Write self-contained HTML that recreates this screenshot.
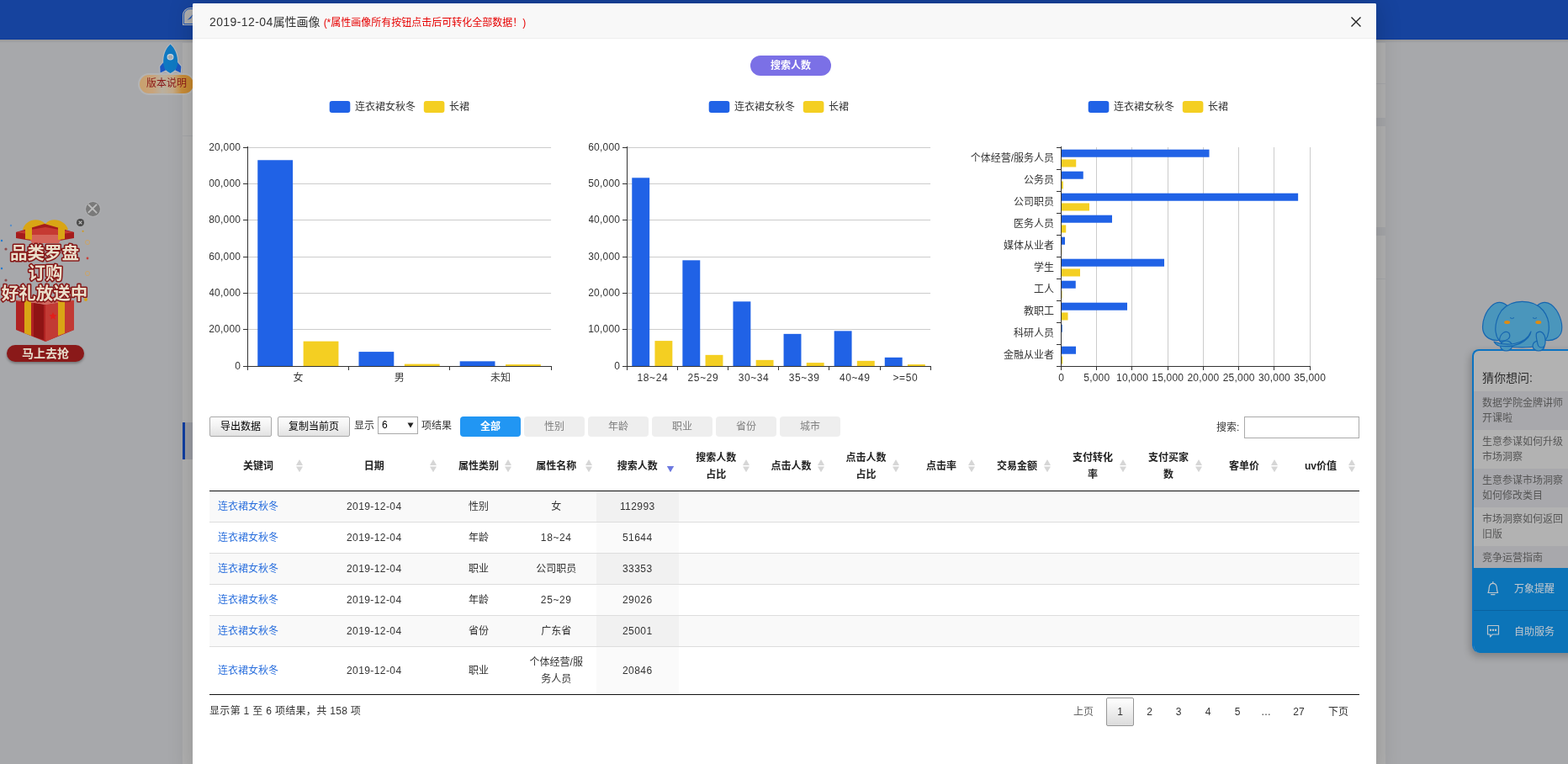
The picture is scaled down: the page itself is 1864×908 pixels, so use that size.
<!DOCTYPE html>
<html lang="zh-CN">
<head>
<meta charset="utf-8">
<title>2019-12-04属性画像</title>
<style>
*{box-sizing:border-box}
html,body{margin:0;padding:0}
body{width:1864px;height:908px;overflow:hidden;position:relative;background:#a7a8ab;
  font-family:"Liberation Sans","Noto Sans CJK SC",sans-serif;font-size:12px;color:#333}
.abs{position:absolute}
#root{position:absolute;left:0;top:0;width:1864px;height:908px;overflow:hidden;will-change:transform}
#topbar{left:0;top:0;width:1864px;height:47px;background:#16439e;border-bottom:1px solid #0c3a9a}
.strip{background:#b2b2b2}
#modal{left:229px;top:4px;width:1407px;height:920px;background:#fff;border-radius:2px;
  box-shadow:0 0 30px rgba(0,0,0,.2);will-change:transform}
#mhead{left:0;top:0;width:1407px;height:42px;background:#f8f8f8;border-bottom:1px solid #eee;border-radius:2px 2px 0 0}
#mtitle{left:20px;top:0;height:42px;line-height:45px;font-size:14px;color:#333;white-space:nowrap}
#mtitle span{font-size:12px;color:#e60000;margin-left:4px}
svg text{font-family:"Liberation Sans","Noto Sans CJK SC",sans-serif;font-size:12px;fill:#333}
.pill{left:892px;top:66px;width:96px;height:24px;border-radius:12px;background:#7b70e6;color:#fff;
  font-weight:bold;font-size:12px;line-height:24px;text-align:center}
.wbtn{top:495px;height:24px;border:1px solid #a9a9a9;border-radius:2px;
  background:linear-gradient(#fdfdfd,#f3f3f3 45%,#e2e2e2);font-size:12px;line-height:22px;text-align:center;color:#000}
.fbtn{top:495px;width:72px;height:24px;border-radius:4px;background:#eee;color:#7f7f7f;font-size:12px;line-height:25px;text-align:center}
.fbtn.on{background:#2196f3;color:#fff;font-weight:bold}
.lbl{font-size:12px;color:#333;white-space:nowrap;line-height:20px;height:20px}
.th{top:523.5px;height:60px;font-weight:bold;font-size:12px;color:#222;text-align:center;line-height:20px;
  display:flex;align-items:center;justify-content:center}
.row{left:249px;width:1367px;border-bottom:1px solid #ddd}
.td{top:0;height:100%;font-size:12px;color:#333;text-align:center;line-height:20px;display:flex;align-items:center;justify-content:center}
.td.n{letter-spacing:.42px}
.td.t{letter-spacing:.62px}
.td.l{justify-content:flex-start;padding-left:10px;color:#2a6fdd}
.pg{top:829px;height:34px;line-height:32px;font-size:12px;color:#333;text-align:center;border:1px solid transparent;border-radius:2px}
.pg.cur{border-color:#979797;background:linear-gradient(#fff,#dcdcdc)}
.rq{left:0;width:130px;height:46px;padding:5px 0 0 10px;font-size:12px;line-height:18px;color:#565656;white-space:nowrap}
.g{will-change:transform}
</style>
</head>
<body>
<div id="root">
<div class="abs" id="topbar"></div>
<div class="abs" style="left:0;top:47px;width:1864px;height:4px;background:linear-gradient(rgba(0,0,0,.10),rgba(0,0,0,0))"></div>
<div class="abs" style="left:217px;top:9px;width:24px;height:21px;border-radius:9px 9px 0 0;background:#b3b3b3"></div>
<div class="abs" style="left:218px;top:10px;width:22px;height:19px;border-radius:8px 8px 0 0;border:1px solid #1c55b8;background:#b0b0b0"></div>
<svg class="abs" style="left:222px;top:16px" width="8" height="9" viewBox="0 0 8 9"><path d="M0.5 8 L7.5 1 L5 6 Z" fill="#1c55b8"/></svg>
<div class="abs strip" style="left:217px;top:51px;width:12px;height:110px"></div>
<div class="abs strip" style="left:217px;top:162px;width:12px;height:746px"></div>
<div class="abs" style="left:217px;top:502px;width:12px;height:44px;background:#9c9ea5"></div>
<div class="abs" style="left:217px;top:502px;width:3px;height:44px;background:#0f3ea3"></div>
<div class="abs strip" style="left:1636px;top:51px;width:11px;height:48px"></div>
<div class="abs strip" style="left:1636px;top:100px;width:11px;height:40px"></div>
<div class="abs strip" style="left:1636px;top:150px;width:11px;height:120px"></div>
<div class="abs strip" style="left:1636px;top:280px;width:11px;height:51px"></div>
<div class="abs strip" style="left:1636px;top:332px;width:11px;height:576px"></div>
<div class="abs" style="left:0;top:0;width:229px;height:440px;will-change:transform">
<div class="abs" style="left:163.5px;top:86.5px;width:68px;height:26px;border-radius:13px;background:rgba(190,190,190,.55)"></div>
<div class="abs" style="left:165.5px;top:88.5px;width:64px;height:22px;border-radius:11px;background:linear-gradient(90deg,#c9a06c 0%,#c8a47c 25%,#b9b0a0 42%,#c4aa88 62%,#c98f3c 78%,#c8872a 100%);color:#8a1717;font-size:12px;line-height:21px;padding-left:8.5px;white-space:nowrap">版本说明</div>
<svg class="abs" style="left:186px;top:50px" width="34" height="40" viewBox="186 50 34 40">
<path d="M202.5 52.5 C196.5 58 193.8 66 194.2 74 L190.2 79 L190.6 86.4 L196 84 L202.5 87 L209 84 L214.8 86.4 L215.3 79 L211.2 74 C211.4 66 208.5 58 202.5 52.5 Z" fill="none" stroke="#b9bcc0" stroke-width="2" stroke-linejoin="round"/>
<path d="M194.3 74 L190.2 79 L190.6 86.4 L197 83.5 Z" fill="#1a57c2"/>
<path d="M211 74 L215.3 79 L214.8 86.4 L208.3 83.5 Z" fill="#1a57c2"/>
<path d="M202.5 52.5 C196.5 58 193.8 66 194.2 75 C194.5 80 196 84 202.5 87 C209 84 210.8 80 211.1 75 C211.4 66 208.5 58 202.5 52.5 Z" fill="#0f79c2"/>
<ellipse cx="202.5" cy="67.8" rx="3.4" ry="3.2" fill="#a9adb0" stroke="#c9d6e0" stroke-width="1.1"/>
</svg>
<div class="abs" style="left:100.5px;top:238.5px;width:19px;height:19px;border-radius:10px;background:#7a7a7a;border:1px solid #b4b5b7"></div>
<svg class="abs" style="left:101px;top:239px" width="18" height="18" viewBox="0 0 18 18"><path d="M4.4 4.4 L13.6 13.6 M13.6 4.4 L4.4 13.4" stroke="#bcbcbc" stroke-width="2" stroke-linecap="round"/></svg>
<div class="abs" style="left:91px;top:260px;width:9.4px;height:9.4px;border-radius:5px;background:#484848"></div>
<svg class="abs" style="left:91.2px;top:260.2px" width="9" height="9" viewBox="0 0 9 9"><path d="M2.6 2.6 L6.4 6.4 M6.4 2.6 L2.6 6.4" stroke="#c4c4c4" stroke-width="1.1"/></svg>
<svg class="abs" style="left:0;top:255px" width="112" height="160" viewBox="0 255 112 160">
<!-- lid -->
<path d="M27 273 C30 262 44 257 54 266 C62 257 78 262 81 273 Z" fill="#d9a515"/>
<path d="M19 276 L53 266 L88 276 L88 283 L54 289 L19 283 Z" fill="#a51c1c"/>
<path d="M19 276 L53 281 L88 276 L54 270 Z" fill="#c63a32"/>
<path d="M33 279 L75 279 L70 289 L38 289 Z" fill="#d5645a"/>
<path d="M30 272 L38 270 L38 285 L30 284 Z M69 270 L77 272 L77 284 L69 285 Z" fill="#d9a515"/>
<!-- box -->
<path d="M19 357 L54 362 L88 357 L88 392 L54 406 L19 392 Z" fill="#b02222"/>
<path d="M54 362 L88 357 L88 392 L54 406 Z" fill="#c23a34"/>
<path d="M19 357 L54 351 L88 357 L54 362 Z" fill="#d26a60"/>
<path d="M29 357 L37 358 L37 399 L29 396 Z M69 358 L77 357 L77 396 L69 399 Z" fill="#d9a515"/>
<path d="M40 360 L52 362 L52 404 L40 400 Z" fill="#8f1414"/>
<path d="M63 371 l1.4 3 3.2 .4 -2.4 2.2 .7 3.2 -2.9 -1.7 -2.9 1.7 .7 -3.2 -2.4 -2.2 3.2 -.4 Z" fill="#e0201c"/>
<!-- confetti -->
<circle cx="2" cy="286" r="1.2" fill="#1f7ad0"/><circle cx="2" cy="319" r="1.2" fill="#1f7ad0"/><circle cx="13" cy="268" r="1.2" fill="#5b8fc8"/>
<circle cx="98.6" cy="274.8" r="1.1" fill="#cf9a22"/><circle cx="104" cy="307" r="1.4" fill="#c8403a"/><circle cx="102" cy="356" r="2" fill="#d7a21a"/>
<circle cx="104" cy="288" r="2.6" fill="none" stroke="#c9a36a" stroke-width="1"/><circle cx="104" cy="325" r="2.6" fill="none" stroke="#c9a36a" stroke-width="1"/>
<circle cx="7" cy="296" r="1.6" fill="#8c4a4a"/><circle cx="7" cy="333" r="1.6" fill="#8c4a4a"/>
<g style="font-weight:bold;font-size:20.5px" text-anchor="middle" stroke="#861616" stroke-width="3.2" stroke-linejoin="round" paint-order="stroke">
<text x="53" y="308" style="fill:#eadfcb;font-size:20.5px;font-weight:bold;paint-order:stroke">品类罗盘</text>
<text x="54" y="332" style="fill:#eadfcb;font-size:20.5px;font-weight:bold;paint-order:stroke">订购</text>
<text x="53" y="356" style="fill:#eadfcb;font-size:20.5px;font-weight:bold;paint-order:stroke">好礼放送中</text>
</g>
</svg>
<div class="abs" style="left:8px;top:410px;width:92px;height:20px;border-radius:10px;background:#8a1919;box-shadow:0 2px 3px rgba(0,0,0,.3);color:#e6dccb;font-weight:bold;font-size:14px;line-height:20px;text-align:center;letter-spacing:0">马上去抢</div>
</div>

<div class="abs" style="left:1750px;top:415px;width:130px;height:361px;border-radius:8px 0 0 9px;box-shadow:-2px 4px 10px rgba(0,0,0,.24);background:#b2b2b2"></div>
<div class="abs" style="left:1750px;top:415px;width:130px;height:361px;border:2px solid #0b73c1;border-right:0;border-bottom:0;border-radius:8px 0 0 9px;overflow:hidden;background:#b2b2b2">
<div class="abs" style="left:10px;top:22px;font-size:14px;line-height:20px;color:#2b2b2b;white-space:nowrap">猜你想问:</div>
<div class="abs rq" style="top:48px;background:#a8a8ac">数据学院金牌讲师<br>开课啦</div>
<div class="abs rq" style="top:94px">生意参谋如何升级<br>市场洞察</div>
<div class="abs rq" style="top:140px;background:#a8a8ac">生意参谋市场洞察<br>如何修改类目</div>
<div class="abs rq" style="top:186px">市场洞察如何返回<br>旧版</div>
<div class="abs rq" style="top:232px;background:#a8a8ac">竞争运营指南</div>
<div class="abs" style="left:-2px;top:258px;width:134px;height:102px;background:#0c74b8"></div>
<div class="abs" style="left:-2px;top:308px;width:134px;height:1px;background:#0a62a0"></div>
<svg class="abs" style="left:12.2px;top:269.7px" width="22" height="24" viewBox="0 0 22 24" fill="none" stroke="#bfc6cc" stroke-width="1.2" stroke-linecap="round" stroke-linejoin="round">
<path d="M5 17.5 C6.2 15.5 6 13.5 6.3 11 C6.7 8 8.3 6.3 10.8 6.3 C13.3 6.3 14.9 8 15.3 11 C15.6 13.5 15.4 15.5 16.6 17.5 Z"/><path d="M10.8 6.2 V4.6"/><path d="M8.6 19.6 H13"/></svg>
<svg class="abs" style="left:12.2px;top:320.5px" width="22" height="24" viewBox="0 0 22 24" fill="none" stroke="#bfc6cc" stroke-width="1.2" stroke-linejoin="round">
<path d="M4.5 5.5 H17.5 V16 H10 L7.5 18.8 V16 H4.5 Z"/><circle cx="8" cy="10.8" r=".6" fill="#bfc6cc"/><circle cx="11" cy="10.8" r=".6" fill="#bfc6cc"/><circle cx="14" cy="10.8" r=".6" fill="#bfc6cc"/></svg>
<div class="abs" style="left:48px;top:273px;font-size:12px;line-height:20px;color:#c3c8cd;white-space:nowrap">万象提醒</div>
<div class="abs" style="left:48px;top:324px;font-size:12px;line-height:20px;color:#c3c8cd;white-space:nowrap">自助服务</div>
</div>
<svg class="abs" style="left:1755px;top:352px;" width="109" height="70" viewBox="1755 352 109 70">
<g fill="#4a96bc" stroke="#1666b0" stroke-width="1.2" stroke-linejoin="round">
<path d="M1793 365 C1789 359 1781 357.5 1775 362 C1766 369 1761 383 1763 393 C1765 401 1773 405.5 1782 404.5 C1787 404 1791 402 1793 400 Z"/>
<path d="M1826 365 C1830 359 1838 357.5 1844 362 C1853 369 1858 383 1856.5 393 C1855 401 1847 405.5 1838 404.5 C1833 404 1829 402 1826 400 Z"/>
<path d="M1785 369 C1792 361 1800 358.3 1809.5 358.3 C1819 358.3 1828 361 1834.5 369 C1840 376 1842 386 1841 394 C1840 402 1836 408 1828 411 C1818 413.5 1800 413.5 1791 411 C1783 408 1779 402 1778 394 C1777 386 1780 376 1785 369 Z"/>
<ellipse cx="1790.5" cy="411" rx="7" ry="6"/>
<ellipse cx="1829" cy="411" rx="7" ry="6"/>
<path d="M1776 406 C1790 412 1814 410 1820 394 C1818 406 1800 414 1782 411 C1779 410 1777 408 1776 406 Z"/>
<path d="M1782.5 405 C1783 396 1790 392 1794 396 C1797 402 1791 406 1782.5 405 Z"/>
<path d="M1826.5 396 C1832 391 1838 397 1837 408 C1836 415 1829 414 1828 409 C1827 404 1825.5 400 1826.5 396 Z"/>
</g>
<path d="M1795 377.6 q2.5 2 5 0 M1822 377.6 q2.5 2 5 0" stroke="#1666b0" stroke-width="1" fill="none"/>
<ellipse cx="1791.6" cy="383" rx="3.5" ry="2" fill="#de8c12"/>
<ellipse cx="1828.8" cy="383" rx="3.5" ry="2" fill="#de8c12"/>
</svg>

<div class="abs" id="modal">
<div class="abs" id="mhead"><div class="abs" id="mtitle"><i style="font-style:normal;letter-spacing:.4px">2019-12-04</i>属性画像<span>(*属性画像所有按钮点击后可转化全部数据！)</span></div><svg class="abs" style="left:1376px;top:15px" width="14" height="14" viewBox="0 0 14 14"><path d="M1.5 1.5 L12.5 12.5 M12.5 1.5 L1.5 12.5" stroke="#222" stroke-width="1.4" fill="none"/></svg></div>
</div>
<div class="abs pill">搜索人数</div>
<svg class="abs" style="left:249px;top:100px;overflow:hidden" width="451" height="380" viewBox="249 100 451 380"><rect x="391.7" y="120" width="24.6" height="14" rx="3" ry="3" fill="#2062e6"/><text x="422" y="131.3">连衣裙女秋冬</text><rect x="503.8" y="120" width="24.6" height="14" rx="3" ry="3" fill="#f4cf22"/><text x="534" y="131.3">长裙</text><line x1="294.5" x2="655.1" y1="391.5" y2="391.5" stroke="#ccc" stroke-width="1"/><line x1="294.5" x2="655.1" y1="348.5" y2="348.5" stroke="#ccc" stroke-width="1"/><line x1="294.5" x2="655.1" y1="305.5" y2="305.5" stroke="#ccc" stroke-width="1"/><line x1="294.5" x2="655.1" y1="261.5" y2="261.5" stroke="#ccc" stroke-width="1"/><line x1="294.5" x2="655.1" y1="218.5" y2="218.5" stroke="#ccc" stroke-width="1"/><line x1="294.5" x2="655.1" y1="175.5" y2="175.5" stroke="#ccc" stroke-width="1"/><rect x="306.27" y="190.28" width="41.81" height="245.22" fill="#2062e6"/><rect x="360.62" y="405.63" width="41.81" height="29.87" fill="#f4cf22"/><rect x="426.47" y="418.09" width="41.81" height="17.41" fill="#2062e6"/><rect x="480.82" y="432.61" width="41.81" height="2.89" fill="#f4cf22"/><rect x="546.67" y="429.36" width="41.81" height="6.14" fill="#2062e6"/><rect x="601.02" y="433.11" width="41.81" height="2.39" fill="#f4cf22"/><line x1="294.5" x2="294.5" y1="174.0" y2="436.0" stroke="#333" stroke-width="1"/><line x1="294.0" x2="656.0" y1="435.5" y2="435.5" stroke="#333" stroke-width="1"/><line x1="289.0" x2="294.5" y1="435.5" y2="435.5" stroke="#333" stroke-width="1"/><text x="286.2" y="439.40" text-anchor="end" style="letter-spacing:.22px">0</text><line x1="289.0" x2="294.5" y1="391.5" y2="391.5" stroke="#333" stroke-width="1"/><text x="286.2" y="395.40" text-anchor="end" style="letter-spacing:.22px">20,000</text><line x1="289.0" x2="294.5" y1="348.5" y2="348.5" stroke="#333" stroke-width="1"/><text x="286.2" y="352.40" text-anchor="end" style="letter-spacing:.22px">40,000</text><line x1="289.0" x2="294.5" y1="305.5" y2="305.5" stroke="#333" stroke-width="1"/><text x="286.2" y="309.40" text-anchor="end" style="letter-spacing:.22px">60,000</text><line x1="289.0" x2="294.5" y1="261.5" y2="261.5" stroke="#333" stroke-width="1"/><text x="286.2" y="265.40" text-anchor="end" style="letter-spacing:.22px">80,000</text><line x1="289.0" x2="294.5" y1="218.5" y2="218.5" stroke="#333" stroke-width="1"/><text x="286.2" y="222.40" text-anchor="end" style="letter-spacing:.22px">100,000</text><line x1="289.0" x2="294.5" y1="175.5" y2="175.5" stroke="#333" stroke-width="1"/><text x="286.2" y="179.40" text-anchor="end" style="letter-spacing:.22px">120,000</text><line x1="294.5" x2="294.5" y1="435.0" y2="440.0" stroke="#333" stroke-width="1"/><line x1="414.5" x2="414.5" y1="435.0" y2="440.0" stroke="#333" stroke-width="1"/><line x1="534.5" x2="534.5" y1="435.0" y2="440.0" stroke="#333" stroke-width="1"/><line x1="655.5" x2="655.5" y1="435.0" y2="440.0" stroke="#333" stroke-width="1"/><text x="354.60" y="453.2" text-anchor="middle">女</text><text x="474.80" y="453.2" text-anchor="middle">男</text><text x="595.00" y="453.2" text-anchor="middle">未知</text></svg>
<svg class="abs" style="left:700px;top:100px;overflow:hidden" width="451" height="380" viewBox="700 100 451 380"><rect x="842.7" y="120" width="24.6" height="14" rx="3" ry="3" fill="#2062e6"/><text x="873" y="131.3">连衣裙女秋冬</text><rect x="954.8" y="120" width="24.6" height="14" rx="3" ry="3" fill="#f4cf22"/><text x="985" y="131.3">长裙</text><line x1="745.5" x2="1106.1" y1="391.5" y2="391.5" stroke="#ccc" stroke-width="1"/><line x1="745.5" x2="1106.1" y1="348.5" y2="348.5" stroke="#ccc" stroke-width="1"/><line x1="745.5" x2="1106.1" y1="305.5" y2="305.5" stroke="#ccc" stroke-width="1"/><line x1="745.5" x2="1106.1" y1="261.5" y2="261.5" stroke="#ccc" stroke-width="1"/><line x1="745.5" x2="1106.1" y1="218.5" y2="218.5" stroke="#ccc" stroke-width="1"/><line x1="745.5" x2="1106.1" y1="175.5" y2="175.5" stroke="#ccc" stroke-width="1"/><rect x="751.26" y="211.31" width="20.90" height="224.19" fill="#2062e6"/><rect x="778.44" y="405.10" width="20.90" height="30.40" fill="#f4cf22"/><rect x="811.36" y="309.32" width="20.90" height="126.18" fill="#2062e6"/><rect x="838.54" y="421.85" width="20.90" height="13.65" fill="#f4cf22"/><rect x="871.46" y="358.35" width="20.90" height="77.15" fill="#2062e6"/><rect x="898.64" y="427.85" width="20.90" height="7.65" fill="#f4cf22"/><rect x="931.56" y="396.85" width="20.90" height="38.65" fill="#2062e6"/><rect x="958.74" y="431.10" width="20.90" height="4.40" fill="#f4cf22"/><rect x="991.66" y="393.35" width="20.90" height="42.15" fill="#2062e6"/><rect x="1018.84" y="428.85" width="20.90" height="6.65" fill="#f4cf22"/><rect x="1051.76" y="424.85" width="20.90" height="10.65" fill="#2062e6"/><rect x="1078.94" y="433.11" width="20.90" height="2.39" fill="#f4cf22"/><line x1="745.5" x2="745.5" y1="174.0" y2="436.0" stroke="#333" stroke-width="1"/><line x1="745.0" x2="1107.0" y1="435.5" y2="435.5" stroke="#333" stroke-width="1"/><line x1="740.0" x2="745.5" y1="435.5" y2="435.5" stroke="#333" stroke-width="1"/><text x="737.2" y="439.40" text-anchor="end" style="letter-spacing:.22px">0</text><line x1="740.0" x2="745.5" y1="391.5" y2="391.5" stroke="#333" stroke-width="1"/><text x="737.2" y="395.40" text-anchor="end" style="letter-spacing:.22px">10,000</text><line x1="740.0" x2="745.5" y1="348.5" y2="348.5" stroke="#333" stroke-width="1"/><text x="737.2" y="352.40" text-anchor="end" style="letter-spacing:.22px">20,000</text><line x1="740.0" x2="745.5" y1="305.5" y2="305.5" stroke="#333" stroke-width="1"/><text x="737.2" y="309.40" text-anchor="end" style="letter-spacing:.22px">30,000</text><line x1="740.0" x2="745.5" y1="261.5" y2="261.5" stroke="#333" stroke-width="1"/><text x="737.2" y="265.40" text-anchor="end" style="letter-spacing:.22px">40,000</text><line x1="740.0" x2="745.5" y1="218.5" y2="218.5" stroke="#333" stroke-width="1"/><text x="737.2" y="222.40" text-anchor="end" style="letter-spacing:.22px">50,000</text><line x1="740.0" x2="745.5" y1="175.5" y2="175.5" stroke="#333" stroke-width="1"/><text x="737.2" y="179.40" text-anchor="end" style="letter-spacing:.22px">60,000</text><line x1="745.5" x2="745.5" y1="435.0" y2="440.0" stroke="#333" stroke-width="1"/><line x1="805.5" x2="805.5" y1="435.0" y2="440.0" stroke="#333" stroke-width="1"/><line x1="865.5" x2="865.5" y1="435.0" y2="440.0" stroke="#333" stroke-width="1"/><line x1="925.5" x2="925.5" y1="435.0" y2="440.0" stroke="#333" stroke-width="1"/><line x1="985.5" x2="985.5" y1="435.0" y2="440.0" stroke="#333" stroke-width="1"/><line x1="1046.5" x2="1046.5" y1="435.0" y2="440.0" stroke="#333" stroke-width="1"/><line x1="1106.5" x2="1106.5" y1="435.0" y2="440.0" stroke="#333" stroke-width="1"/><text x="775.85" y="453.2" text-anchor="middle" style="letter-spacing:.6px">18~24</text><text x="835.95" y="453.2" text-anchor="middle" style="letter-spacing:.6px">25~29</text><text x="896.05" y="453.2" text-anchor="middle" style="letter-spacing:.6px">30~34</text><text x="956.15" y="453.2" text-anchor="middle" style="letter-spacing:.6px">35~39</text><text x="1016.25" y="453.2" text-anchor="middle" style="letter-spacing:.6px">40~49</text><text x="1076.35" y="453.2" text-anchor="middle" style="letter-spacing:.6px">>=50</text></svg>
<svg class="abs" style="left:1151px;top:100px;overflow:hidden" width="465" height="380" viewBox="1151 100 465 380"><rect x="1293.7" y="120" width="24.6" height="14" rx="3" ry="3" fill="#2062e6"/><text x="1324" y="131.3">连衣裙女秋冬</text><rect x="1405.8" y="120" width="24.6" height="14" rx="3" ry="3" fill="#f4cf22"/><text x="1436" y="131.3">长裙</text><line x1="1303.5" x2="1303.5" y1="175.0" y2="435.0" stroke="#ccc" stroke-width="1"/><line x1="1345.5" x2="1345.5" y1="175.0" y2="435.0" stroke="#ccc" stroke-width="1"/><line x1="1388.5" x2="1388.5" y1="175.0" y2="435.0" stroke="#ccc" stroke-width="1"/><line x1="1430.5" x2="1430.5" y1="175.0" y2="435.0" stroke="#ccc" stroke-width="1"/><line x1="1472.5" x2="1472.5" y1="175.0" y2="435.0" stroke="#ccc" stroke-width="1"/><line x1="1514.5" x2="1514.5" y1="175.0" y2="435.0" stroke="#ccc" stroke-width="1"/><line x1="1557.5" x2="1557.5" y1="175.0" y2="435.0" stroke="#ccc" stroke-width="1"/><rect x="1261.5" y="177.70" width="176.03" height="9.04" fill="#2062e6"/><rect x="1261.5" y="189.46" width="17.73" height="9.04" fill="#f4cf22"/><rect x="1261.5" y="203.70" width="26.25" height="9.04" fill="#2062e6"/><rect x="1261.5" y="215.46" width="2.28" height="9.04" fill="#f4cf22"/><rect x="1261.5" y="229.70" width="281.64" height="9.04" fill="#2062e6"/><rect x="1261.5" y="241.46" width="33.52" height="9.04" fill="#f4cf22"/><rect x="1261.5" y="255.70" width="60.51" height="9.04" fill="#2062e6"/><rect x="1261.5" y="267.46" width="5.74" height="9.04" fill="#f4cf22"/><rect x="1261.5" y="281.70" width="4.50" height="9.04" fill="#2062e6"/><rect x="1261.5" y="293.46" width="0.76" height="9.04" fill="#f4cf22"/><rect x="1261.5" y="307.70" width="122.52" height="9.04" fill="#2062e6"/><rect x="1261.5" y="319.46" width="22.50" height="9.04" fill="#f4cf22"/><rect x="1261.5" y="333.70" width="17.25" height="9.04" fill="#2062e6"/><rect x="1261.5" y="345.46" width="1.01" height="9.04" fill="#f4cf22"/><rect x="1261.5" y="359.70" width="78.51" height="9.04" fill="#2062e6"/><rect x="1261.5" y="371.46" width="8.02" height="9.04" fill="#f4cf22"/><rect x="1261.5" y="385.70" width="1.27" height="9.04" fill="#2062e6"/><rect x="1261.5" y="397.46" width="0.00" height="9.04" fill="#f4cf22"/><rect x="1261.5" y="411.70" width="17.51" height="9.04" fill="#2062e6"/><rect x="1261.5" y="423.46" width="1.69" height="9.04" fill="#f4cf22"/><line x1="1261.5" x2="1261.5" y1="174.0" y2="436.0" stroke="#333" stroke-width="1"/><line x1="1261.0" x2="1558.0" y1="435.5" y2="435.5" stroke="#333" stroke-width="1"/><line x1="1256.0" x2="1261.5" y1="175.5" y2="175.5" stroke="#333" stroke-width="1"/><line x1="1256.0" x2="1261.5" y1="201.5" y2="201.5" stroke="#333" stroke-width="1"/><line x1="1256.0" x2="1261.5" y1="227.5" y2="227.5" stroke="#333" stroke-width="1"/><line x1="1256.0" x2="1261.5" y1="253.5" y2="253.5" stroke="#333" stroke-width="1"/><line x1="1256.0" x2="1261.5" y1="279.5" y2="279.5" stroke="#333" stroke-width="1"/><line x1="1256.0" x2="1261.5" y1="305.5" y2="305.5" stroke="#333" stroke-width="1"/><line x1="1256.0" x2="1261.5" y1="331.5" y2="331.5" stroke="#333" stroke-width="1"/><line x1="1256.0" x2="1261.5" y1="357.5" y2="357.5" stroke="#333" stroke-width="1"/><line x1="1256.0" x2="1261.5" y1="383.5" y2="383.5" stroke="#333" stroke-width="1"/><line x1="1256.0" x2="1261.5" y1="409.5" y2="409.5" stroke="#333" stroke-width="1"/><line x1="1256.0" x2="1261.5" y1="435.5" y2="435.5" stroke="#333" stroke-width="1"/><text x="1253.0" y="191.80" text-anchor="end">个体经营/服务人员</text><text x="1253.0" y="217.80" text-anchor="end">公务员</text><text x="1253.0" y="243.80" text-anchor="end">公司职员</text><text x="1253.0" y="269.80" text-anchor="end">医务人员</text><text x="1253.0" y="295.80" text-anchor="end">媒体从业者</text><text x="1253.0" y="321.80" text-anchor="end">学生</text><text x="1253.0" y="347.80" text-anchor="end">工人</text><text x="1253.0" y="373.80" text-anchor="end">教职工</text><text x="1253.0" y="399.80" text-anchor="end">科研人员</text><text x="1253.0" y="425.80" text-anchor="end">金融从业者</text><line x1="1261.5" x2="1261.5" y1="435.0" y2="440.0" stroke="#333" stroke-width="1"/><text x="1261.60" y="453.2" text-anchor="middle" style="letter-spacing:.22px">0</text><line x1="1303.5" x2="1303.5" y1="435.0" y2="440.0" stroke="#333" stroke-width="1"/><text x="1303.82" y="453.2" text-anchor="middle" style="letter-spacing:.22px">5,000</text><line x1="1345.5" x2="1345.5" y1="435.0" y2="440.0" stroke="#333" stroke-width="1"/><text x="1346.04" y="453.2" text-anchor="middle" style="letter-spacing:.22px">10,000</text><line x1="1388.5" x2="1388.5" y1="435.0" y2="440.0" stroke="#333" stroke-width="1"/><text x="1388.26" y="453.2" text-anchor="middle" style="letter-spacing:.22px">15,000</text><line x1="1430.5" x2="1430.5" y1="435.0" y2="440.0" stroke="#333" stroke-width="1"/><text x="1430.49" y="453.2" text-anchor="middle" style="letter-spacing:.22px">20,000</text><line x1="1472.5" x2="1472.5" y1="435.0" y2="440.0" stroke="#333" stroke-width="1"/><text x="1472.71" y="453.2" text-anchor="middle" style="letter-spacing:.22px">25,000</text><line x1="1514.5" x2="1514.5" y1="435.0" y2="440.0" stroke="#333" stroke-width="1"/><text x="1514.93" y="453.2" text-anchor="middle" style="letter-spacing:.22px">30,000</text><line x1="1557.5" x2="1557.5" y1="435.0" y2="440.0" stroke="#333" stroke-width="1"/><text x="1557.15" y="453.2" text-anchor="middle" style="letter-spacing:.22px">35,000</text></svg>
<div class="abs wbtn" style="left:249px;width:74px">导出数据</div>
<div class="abs wbtn" style="left:330px;width:86px">复制当前页</div>
<div class="abs lbl" style="left:421px;top:496px">显示</div>
<div class="abs" style="left:449px;top:495px;width:48px;height:21px;border:1px solid #a9a9a9;background:#fff;font-size:12px;line-height:19px;padding-left:4px;color:#000">6<svg class="abs" style="right:4px;top:6px" width="8" height="7" viewBox="0 0 8 7"><path d="M0.5 0.5 L7.5 0.5 L4 6.5 Z" fill="#222"/></svg></div>
<div class="abs lbl" style="left:501px;top:496px">项结果</div>
<div class="abs fbtn on" style="left:547px">全部</div>
<div class="abs fbtn" style="left:623px">性别</div>
<div class="abs fbtn" style="left:699px">年龄</div>
<div class="abs fbtn" style="left:775px">职业</div>
<div class="abs fbtn" style="left:851px">省份</div>
<div class="abs fbtn" style="left:927px">城市</div>
<div class="abs lbl" style="left:1446px;top:498px">搜索:</div>
<div class="abs" style="left:1479px;top:495px;width:137px;height:26px;border:1px solid #aaa;background:#fff"></div>
<div class="abs th" style="left:249px;width:116px"><div>关键词</div></div><svg class="abs" style="left:350.5px;top:545px" width="10" height="17" viewBox="0 0 10 17"><path d="M5 1 L9 8 L1 8 Z" fill="#d6d6d6"/><path d="M1 9.5 L9 9.5 L5 16.3 Z" fill="#d6d6d6"/></svg>
<div class="abs th" style="left:365px;width:159.5px"><div>日期</div></div><svg class="abs" style="left:510.0px;top:545px" width="10" height="17" viewBox="0 0 10 17"><path d="M5 1 L9 8 L1 8 Z" fill="#d6d6d6"/><path d="M1 9.5 L9 9.5 L5 16.3 Z" fill="#d6d6d6"/></svg>
<div class="abs th" style="left:524.5px;width:89.0px"><div>属性类别</div></div><svg class="abs" style="left:599.0px;top:545px" width="10" height="17" viewBox="0 0 10 17"><path d="M5 1 L9 8 L1 8 Z" fill="#d6d6d6"/><path d="M1 9.5 L9 9.5 L5 16.3 Z" fill="#d6d6d6"/></svg>
<div class="abs th" style="left:613.5px;width:95.5px"><div>属性名称</div></div><svg class="abs" style="left:694.5px;top:545px" width="10" height="17" viewBox="0 0 10 17"><path d="M5 1 L9 8 L1 8 Z" fill="#d6d6d6"/><path d="M1 9.5 L9 9.5 L5 16.3 Z" fill="#d6d6d6"/></svg>
<div class="abs th" style="left:709px;width:97.5px"><div>搜索人数</div></div><svg class="abs" style="left:792.0px;top:545px" width="10" height="17" viewBox="0 0 10 17"><path d="M0.8 9 L9.2 9 L5 16.2 Z" fill="#6d79e0"/></svg>
<div class="abs th" style="left:806.5px;width:89.5px"><div>搜索人数<br>占比</div></div><svg class="abs" style="left:881.5px;top:545px" width="10" height="17" viewBox="0 0 10 17"><path d="M5 1 L9 8 L1 8 Z" fill="#d6d6d6"/><path d="M1 9.5 L9 9.5 L5 16.3 Z" fill="#d6d6d6"/></svg>
<div class="abs th" style="left:896px;width:89px"><div>点击人数</div></div><svg class="abs" style="left:970.5px;top:545px" width="10" height="17" viewBox="0 0 10 17"><path d="M5 1 L9 8 L1 8 Z" fill="#d6d6d6"/><path d="M1 9.5 L9 9.5 L5 16.3 Z" fill="#d6d6d6"/></svg>
<div class="abs th" style="left:985px;width:89px"><div>点击人数<br>占比</div></div><svg class="abs" style="left:1059.5px;top:545px" width="10" height="17" viewBox="0 0 10 17"><path d="M5 1 L9 8 L1 8 Z" fill="#d6d6d6"/><path d="M1 9.5 L9 9.5 L5 16.3 Z" fill="#d6d6d6"/></svg>
<div class="abs th" style="left:1074px;width:90px"><div>点击率</div></div><svg class="abs" style="left:1149.5px;top:545px" width="10" height="17" viewBox="0 0 10 17"><path d="M5 1 L9 8 L1 8 Z" fill="#d6d6d6"/><path d="M1 9.5 L9 9.5 L5 16.3 Z" fill="#d6d6d6"/></svg>
<div class="abs th" style="left:1164px;width:90px"><div>交易金额</div></div><svg class="abs" style="left:1239.5px;top:545px" width="10" height="17" viewBox="0 0 10 17"><path d="M5 1 L9 8 L1 8 Z" fill="#d6d6d6"/><path d="M1 9.5 L9 9.5 L5 16.3 Z" fill="#d6d6d6"/></svg>
<div class="abs th" style="left:1254px;width:90px"><div>支付转化<br>率</div></div><svg class="abs" style="left:1329.5px;top:545px" width="10" height="17" viewBox="0 0 10 17"><path d="M5 1 L9 8 L1 8 Z" fill="#d6d6d6"/><path d="M1 9.5 L9 9.5 L5 16.3 Z" fill="#d6d6d6"/></svg>
<div class="abs th" style="left:1344px;width:90px"><div>支付买家<br>数</div></div><svg class="abs" style="left:1419.5px;top:545px" width="10" height="17" viewBox="0 0 10 17"><path d="M5 1 L9 8 L1 8 Z" fill="#d6d6d6"/><path d="M1 9.5 L9 9.5 L5 16.3 Z" fill="#d6d6d6"/></svg>
<div class="abs th" style="left:1434px;width:90px"><div>客单价</div></div><svg class="abs" style="left:1509.5px;top:545px" width="10" height="17" viewBox="0 0 10 17"><path d="M5 1 L9 8 L1 8 Z" fill="#d6d6d6"/><path d="M1 9.5 L9 9.5 L5 16.3 Z" fill="#d6d6d6"/></svg>
<div class="abs th" style="left:1524px;width:92px"><div>uv价值</div></div><svg class="abs" style="left:1601.5px;top:545px" width="10" height="17" viewBox="0 0 10 17"><path d="M5 1 L9 8 L1 8 Z" fill="#d6d6d6"/><path d="M1 9.5 L9 9.5 L5 16.3 Z" fill="#d6d6d6"/></svg>
<div class="abs" style="left:249px;top:583px;width:1367px;height:1px;background:#111"></div>
<div class="abs row" style="top:584px;height:37px;background:#f9f9f9;"><div class="abs" style="left:460px;top:0;width:97.5px;height:36px;background:#f1f1f1"></div><div class="abs td l" style="left:0px;width:116px;height:36px">连衣裙女秋冬</div><div class="abs td n" style="left:116px;width:159.5px;height:36px">2019-12-04</div><div class="abs td" style="left:275.5px;width:89.0px;height:36px">性别</div><div class="abs td" style="left:364.5px;width:95.5px;height:36px">女</div><div class="abs td n" style="left:460px;width:97.5px;height:36px">112993</div></div>
<div class="abs row" style="top:621px;height:37px;background:#fff;"><div class="abs" style="left:460px;top:0;width:97.5px;height:36px;background:#fafafa"></div><div class="abs td l" style="left:0px;width:116px;height:36px">连衣裙女秋冬</div><div class="abs td n" style="left:116px;width:159.5px;height:36px">2019-12-04</div><div class="abs td" style="left:275.5px;width:89.0px;height:36px">年龄</div><div class="abs td t" style="left:364.5px;width:95.5px;height:36px">18~24</div><div class="abs td n" style="left:460px;width:97.5px;height:36px">51644</div></div>
<div class="abs row" style="top:658px;height:37px;background:#f9f9f9;"><div class="abs" style="left:460px;top:0;width:97.5px;height:36px;background:#f1f1f1"></div><div class="abs td l" style="left:0px;width:116px;height:36px">连衣裙女秋冬</div><div class="abs td n" style="left:116px;width:159.5px;height:36px">2019-12-04</div><div class="abs td" style="left:275.5px;width:89.0px;height:36px">职业</div><div class="abs td" style="left:364.5px;width:95.5px;height:36px">公司职员</div><div class="abs td n" style="left:460px;width:97.5px;height:36px">33353</div></div>
<div class="abs row" style="top:695px;height:37px;background:#fff;"><div class="abs" style="left:460px;top:0;width:97.5px;height:36px;background:#fafafa"></div><div class="abs td l" style="left:0px;width:116px;height:36px">连衣裙女秋冬</div><div class="abs td n" style="left:116px;width:159.5px;height:36px">2019-12-04</div><div class="abs td" style="left:275.5px;width:89.0px;height:36px">年龄</div><div class="abs td t" style="left:364.5px;width:95.5px;height:36px">25~29</div><div class="abs td n" style="left:460px;width:97.5px;height:36px">29026</div></div>
<div class="abs row" style="top:732px;height:37px;background:#f9f9f9;"><div class="abs" style="left:460px;top:0;width:97.5px;height:36px;background:#f1f1f1"></div><div class="abs td l" style="left:0px;width:116px;height:36px">连衣裙女秋冬</div><div class="abs td n" style="left:116px;width:159.5px;height:36px">2019-12-04</div><div class="abs td" style="left:275.5px;width:89.0px;height:36px">省份</div><div class="abs td" style="left:364.5px;width:95.5px;height:36px">广东省</div><div class="abs td n" style="left:460px;width:97.5px;height:36px">25001</div></div>
<div class="abs row" style="top:769px;height:57px;background:#fff;border-bottom:1px solid #111"><div class="abs" style="left:460px;top:0;width:97.5px;height:56px;background:#fafafa"></div><div class="abs td l" style="left:0px;width:116px;height:56px">连衣裙女秋冬</div><div class="abs td n" style="left:116px;width:159.5px;height:56px">2019-12-04</div><div class="abs td" style="left:275.5px;width:89.0px;height:56px">职业</div><div class="abs td" style="left:364.5px;width:95.5px;height:56px">个体经营/服<br>务人员</div><div class="abs td n" style="left:460px;width:97.5px;height:56px">20846</div></div>
<div class="abs lbl" style="left:249px;top:835px;letter-spacing:.32px">显示第 1 至 6 项结果，共 158 项</div>
<div class="abs pg " style="left:1268.0px;width:40px;color:#666">上页</div><div class="abs pg cur" style="left:1315.0px;width:33px">1</div><div class="abs pg " style="left:1346.5px;width:40px">2</div><div class="abs pg " style="left:1381.0px;width:40px">3</div><div class="abs pg " style="left:1416.0px;width:40px">4</div><div class="abs pg " style="left:1451.0px;width:40px">5</div><div class="abs pg " style="left:1485.0px;width:40px">…</div><div class="abs pg " style="left:1524.0px;width:40px">27</div><div class="abs pg " style="left:1571.0px;width:40px">下页</div>
</div>
</body>
</html>
